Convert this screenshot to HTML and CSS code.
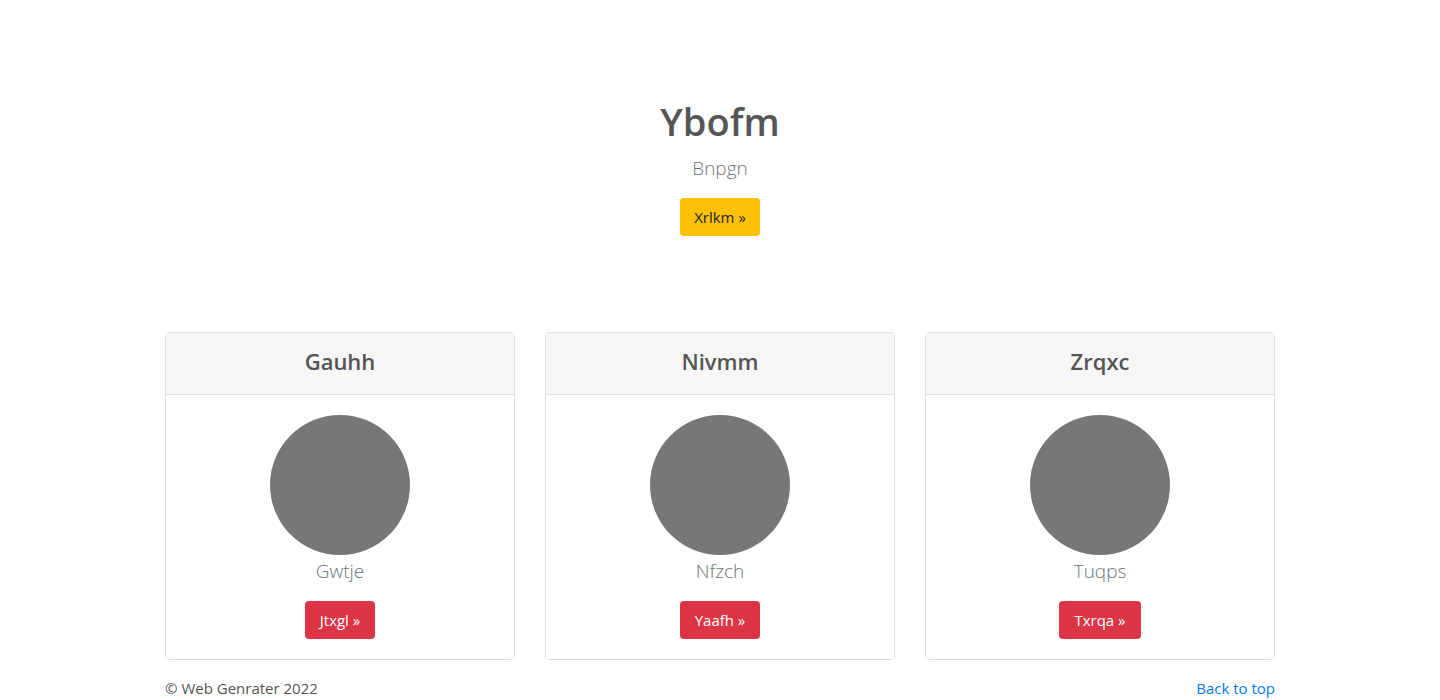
FILE: index.html
```html
<!DOCTYPE html>
<html lang="en">
<head>
<meta charset="utf-8">
<title>Ybofm</title>
<link rel="stylesheet" href="styles.css">
</head>
<body>
<main>
  <section class="hero">
    <h1 class="hero-title">Ybofm</h1>
    <p class="lead">Bnpgn</p>
    <a class="btn btn-warning" href="#">Xrlkm »</a>
  </section>
  <div class="container">
    <div class="cards">
      <div class="card">
        <div class="card-header"><h4>Gauhh</h4></div>
        <div class="card-body">
          <div class="avatar"></div>
          <p class="lead name">Gwtje</p>
          <a class="btn btn-danger" href="#">Jtxgl »</a>
        </div>
      </div>
      <div class="card">
        <div class="card-header"><h4>Nivmm</h4></div>
        <div class="card-body">
          <div class="avatar"></div>
          <p class="lead name">Nfzch</p>
          <a class="btn btn-danger" href="#">Yaafh »</a>
        </div>
      </div>
      <div class="card">
        <div class="card-header"><h4>Zrqxc</h4></div>
        <div class="card-body">
          <div class="avatar"></div>
          <p class="lead name">Tuqps</p>
          <a class="btn btn-danger" href="#">Txrqa »</a>
        </div>
      </div>
    </div>
    <footer class="footer">
      <span>© Web Genrater 2022</span>
      <a href="#" class="back">Back to top</a>
    </footer>
  </div>
</main>
</body>
</html>
```
FILE: styles.css
```css
* { box-sizing: border-box; }
body {
  margin: 0;
  font-family: "Open Sans", "Noto Sans", sans-serif;
  font-size: 16px;
  line-height: 1.5;
  color: #555;
  background: #fff;
}
.hero {
  text-align: center;
  padding: 97px 0 96px;
}
.hero-title {
  margin: 0 0 8px;
  font-size: 38px;
  line-height: 48px;
  font-weight: 600;
  color: #555;
}
.lead {
  margin: 0 0 15px;
  font-size: 19px;
  line-height: 30px;
  font-weight: 300;
  color: #6c757d;
}
.btn {
  display: inline-block;
  padding: 7px 15px;
  font-size: 15px;
  line-height: 24px;
  border-radius: 4px;
  text-decoration: none;
}
.btn-warning { background: #ffc107; color: #212529; padding: 7px 14px; }
.btn-danger { background: #dc3545; color: #fff; }
.container {
  width: 1110px;
  margin: 0 auto;
}
.cards {
  display: grid;
  grid-template-columns: repeat(3, 350px);
  gap: 30px;
}
.card {
  border: 1px solid #dfdfdf;
  border-radius: 4px;
  text-align: center;
  overflow: hidden;
}
.card-header {
  background: #f7f7f7;
  border-bottom: 1px solid #dfdfdf;
  padding: 14px 20px 18px;
}
.card-header h4 {
  margin: 0;
  font-size: 22px;
  line-height: 29px;
  font-weight: 600;
  color: #555;
}
.card-body {
  padding: 20px 20px 20px;
}
.avatar {
  width: 140px;
  height: 140px;
  border-radius: 50%;
  background: #777;
  margin: 0 auto 1px;
}
.name { margin-bottom: 15px; }
.footer {
  display: flex;
  justify-content: space-between;
  padding-top: 16px;
  font-size: 15px;
  line-height: 24px;
  color: #555;
}
.back { color: #007bff; text-decoration: none; }
```
